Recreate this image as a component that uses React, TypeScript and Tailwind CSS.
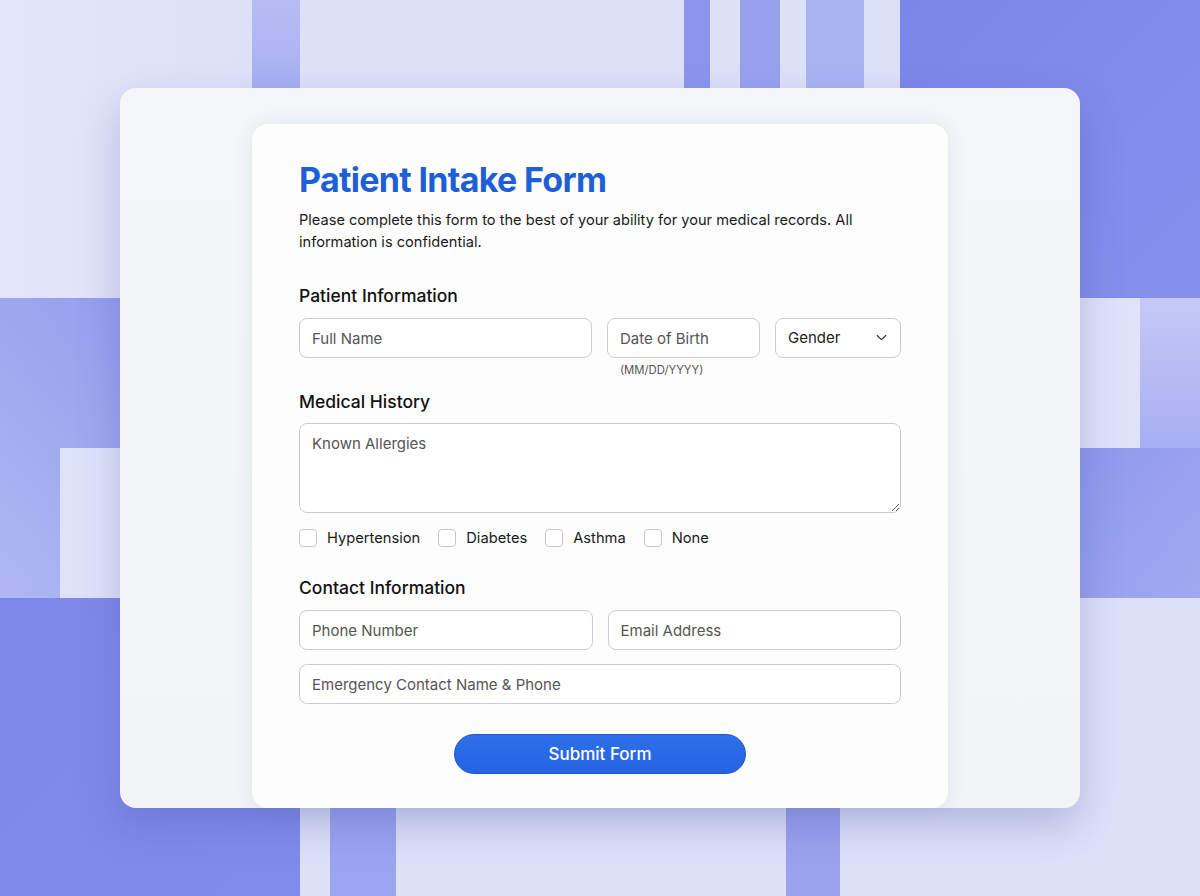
import React from 'react';

// Decorative backdrop: a loose grid of blue/lavender blocks
function Backdrop() {
  const blocks: [number, number, number, number, string][] = [
    [0, 0, 252, 298, 'url(#lightL)'],
    [252, 0, 48, 120, 'url(#stripA)'],
    [684, 0, 26, 120, '#8b95ec'],
    [740, 0, 40, 120, '#99a1ef'],
    [806, 0, 58, 120, '#abb2f2'],
    [900, 0, 300, 298, 'url(#blueTR)'],
    [0, 298, 260, 300, 'url(#midL)'],
    [60, 448, 200, 150, '#dfe3f9'],
    [0, 598, 300, 298, 'url(#blueBL)'],
    [330, 780, 66, 116, '#9ba4f0'],
    [786, 780, 54, 116, '#9aa2ee'],
    [1080, 298, 60, 150, '#dfe2f9'],
    [1140, 298, 60, 150, 'url(#midR)'],
    [1080, 448, 120, 150, 'url(#midR2)'],
  ];
  return (
    <svg className="absolute inset-0" width="1200" height="896" viewBox="0 0 1200 896">
      <defs>
        <linearGradient id="lightL" x1="0" y1="0" x2="1" y2="0">
          <stop offset="0" stopColor="#e3e6f9" />
          <stop offset="1" stopColor="#dde1f8" />
        </linearGradient>
        <linearGradient id="stripA" x1="0" y1="0" x2="0" y2="1">
          <stop offset="0" stopColor="#b7bdf3" />
          <stop offset="1" stopColor="#a2aaf0" />
        </linearGradient>
        <linearGradient id="blueTR" x1="0" y1="0" x2="1" y2="1">
          <stop offset="0" stopColor="#7b86ea" />
          <stop offset="1" stopColor="#8590ec" />
        </linearGradient>
        <linearGradient id="midL" x1="1" y1="0" x2="0" y2="1">
          <stop offset="0" stopColor="#8b95ec" />
          <stop offset="1" stopColor="#b0b7f2" />
        </linearGradient>
        <linearGradient id="blueBL" x1="0" y1="0" x2="1" y2="1">
          <stop offset="0" stopColor="#7d88ea" />
          <stop offset="1" stopColor="#808bec" />
        </linearGradient>
        <linearGradient id="midR" x1="0" y1="0" x2="0" y2="1">
          <stop offset="0" stopColor="#c4c9f5" />
          <stop offset="1" stopColor="#a7aef1" />
        </linearGradient>
        <linearGradient id="midR2" x1="0" y1="0" x2="1" y2="1">
          <stop offset="0" stopColor="#8f99ed" />
          <stop offset="1" stopColor="#a0a9f1" />
        </linearGradient>
      </defs>
      <rect width="1200" height="896" fill="#dde1f8" />
      {blocks.map(([x, y, w, h, fill], i) => (
        <rect key={i} x={x} y={y} width={w} height={h} fill={fill} />
      ))}
    </svg>
  );
}

function ChevronDownIcon({ className }: { className?: string }) {
  return (
    <svg className={className} fill="none" viewBox="0 0 12 12" stroke="currentColor">
      <path strokeLinecap="round" strokeLinejoin="round" strokeWidth={1.1} d="M2 4.2 6 8l4-3.8" />
    </svg>
  );
}

const inputClass =
  'h-10 rounded-lg border-[1.5px] border-[#c9cdd6] bg-white px-3 text-[15px] text-[#222] placeholder:text-[#555] outline-none';

function SectionTitle({ children, className }: { children: React.ReactNode; className?: string }) {
  return <h2 className={`text-[17.5px] font-medium leading-6 text-[#111] ${className ?? ''}`}>{children}</h2>;
}

function Check({ label }: { label: string }) {
  return (
    <label className="flex items-center gap-[10px]">
      <input
        type="checkbox"
        className="h-[18px] w-[18px] appearance-none rounded-[4px] border-[1.5px] border-[#c3c7d0] bg-white"
      />
      <span className="text-[14.7px] text-[#1a1a1a]">{label}</span>
    </label>
  );
}

export default function App() {
  return (
    <div className="relative h-[896px] w-[1200px] overflow-hidden font-['Inter',sans-serif]">
      <Backdrop />

      <div className="relative mx-auto mt-[88px] flex w-[960px] justify-center rounded-2xl bg-gradient-to-b from-[#f4f6fa] to-[#f2f4f8] pt-9 shadow-[0_18px_40px_rgba(70,80,160,0.28)]">
        <form
          className="w-[696px] rounded-2xl bg-[#fdfdfd] px-[47px] pb-[34px] pt-9 shadow-[0_0_18px_rgba(90,100,140,0.12)]"
          onSubmit={(e) => e.preventDefault()}
        >
          <h1 className="text-[34px] font-bold leading-10 tracking-[-0.02em] text-[#1e5fd8]">Patient Intake Form</h1>
          <p className="mt-[9px] text-[14.6px] leading-[22px] text-[#1a1a1a]">
            Please complete this form to the best of your ability for your medical records. All information is
            confidential.
          </p>

          {/* Patient Information */}
          <SectionTitle className="mt-[31px]">Patient Information</SectionTitle>
          <div className="mt-[10px] flex items-start gap-[15px]">
            <input className={`${inputClass} w-[293px] flex-none`} placeholder="Full Name" />
            <div className="w-[153px] flex-none">
              <input className={`${inputClass} w-full`} placeholder="Date of Birth" />
              <div className="mt-[5px] pl-[13px] text-[11.3px] leading-[14px] text-[#555]">(MM/DD/YYYY)</div>
            </div>
            <div className="relative min-w-0 flex-1">
              <select className={`${inputClass} w-full appearance-none`} defaultValue="">
                <option value="" disabled>
                  Gender
                </option>
                <option>Female</option>
                <option>Male</option>
                <option>Other</option>
              </select>
              <ChevronDownIcon className="pointer-events-none absolute right-[13px] top-[13px] h-[13px] w-[13px] text-[#333]" />
            </div>
          </div>

          {/* Medical History */}
          <SectionTitle className="mt-[13px]">Medical History</SectionTitle>
          <textarea
            className="mt-[9px] block h-[90px] w-full rounded-lg border-[1.5px] border-[#c9cdd6] bg-white px-3 py-[9px] text-[15px] leading-[22px] text-[#222] placeholder:text-[#555] outline-none"
            placeholder="Known Allergies"
          />
          <div className="mt-[13px] flex h-6 items-center gap-[18px]">
            <Check label="Hypertension" />
            <Check label="Diabetes" />
            <Check label="Asthma" />
            <Check label="None" />
          </div>

          {/* Contact Information */}
          <SectionTitle className="mt-[26px]">Contact Information</SectionTitle>
          <div className="mt-[10px] grid grid-cols-2 gap-[15px]">
            <input className={`${inputClass} w-full`} placeholder="Phone Number" />
            <input className={`${inputClass} w-full`} placeholder="Email Address" />
          </div>
          <input className={`${inputClass} mt-[14px] w-full`} placeholder="Emergency Contact Name & Phone" />

          <div className="mt-[30px] flex justify-center">
            <button
              type="submit"
              className="h-10 w-[292px] rounded-full border border-[#1f58cc] bg-gradient-to-b from-[#2f6fea] to-[#2563e0] pt-[2px] text-[17px] font-medium text-white"
            >
              Submit Form
            </button>
          </div>
        </form>
      </div>
    </div>
  );
}
